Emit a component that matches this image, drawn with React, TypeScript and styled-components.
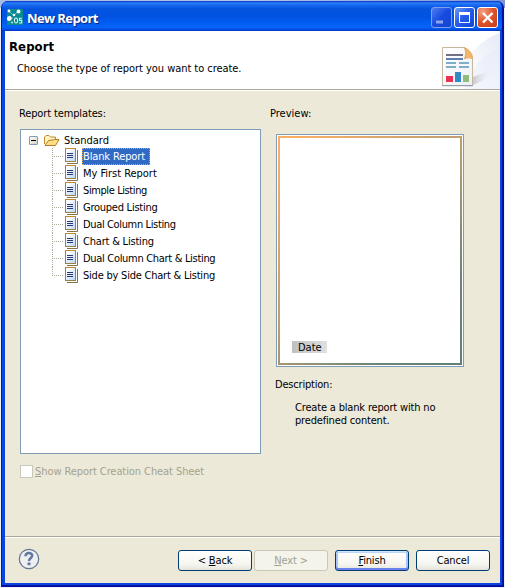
import React from "react";
import styled, { createGlobalStyle, css } from "styled-components";

const GlobalStyle = createGlobalStyle`
  * { box-sizing: border-box; }
  body { margin: 0; background: #e4e7f2; overflow: hidden; }
`;

const Desktop = styled.div`
  width: 505px;
  height: 588px;
  padding: 1px;
  background: linear-gradient(to right, #a9bbe0 0, #b5c4e8 250px, #7b95d8 100%) 0 0 / 100% 8px no-repeat, #eef0f8;
  font: 11px/13px "DejaVu Sans Condensed", "DejaVu Sans", sans-serif;
  font-stretch: condensed;
  color: #000;
`;

const Window = styled.div`
  width: 503px;
  height: 586px;
  display: flex;
  flex-direction: column;
  border-radius: 7px 7px 0 0;
  overflow: hidden;
  background: #0a45e0;
  border: solid #0010a0;
  border-width: 0 2px 2px 1px;
  border-left-color: #0019cf;
`;

const TitleBar = styled.div`
  flex: none;
  height: 30px;
  display: flex;
  align-items: center;
  padding: 0 4px 0 5px;
  background: linear-gradient(#0831c8 0, #2b80f8 2px, #1768ef 4px, #0453df 8px, #0053e1 16px, #005bf1 21px, #0665fb 26px, #0455e8 28px, #0034c0 30px);
`;

const TitleText = styled.h1`
  margin: 3px auto 0 4px;
  font: bold 13px/18px "Open Sans", "Noto Sans", sans-serif;
  letter-spacing: -0.6px;
  color: #fff;
  text-shadow: 1px 1px 1px #06257e;
`;

const CaptionButton = styled.div<{ $kind?: "close" | "off" }>`
  width: 21px;
  height: 21px;
  margin: 3px 0 0 2px;
  border: 1px solid ${(p) => (p.$kind === "off" ? "#7f9eee" : "#fff")};
  border-radius: 3px;
  background: ${(p) =>
    p.$kind === "close"
      ? "radial-gradient(circle at 25% 20%, #f1a183 0, #e0532c 50%, #c33d17 100%)"
      : p.$kind === "off"
        ? "linear-gradient(135deg, #4b7df0, #174be0 50%, #1345cf)"
        : "linear-gradient(135deg, #6f9cf8, #255de9 45%, #0d46d8)"};
  svg { display: block; }
`;

const Content = styled.div`
  flex: 1;
  display: flex;
  flex-direction: column;
  margin: 0 2px 2px 3px;
  background: #ece9d8;
`;

const Header = styled.header`
  height: 60px;
  display: flex;
  justify-content: space-between;
  background: #fff;
  border-bottom: 1px solid #fff;
  box-shadow: inset 0 -1px #aca899;
`;

const HeaderText = styled.div`
  padding: 8px 0 0 4px;
`;

const Heading = styled.h2`
  margin: 0;
  font: bold 13px/16px "DejaVu Sans Condensed", "DejaVu Sans", sans-serif;
  font-stretch: condensed;
  letter-spacing: 0.1px;
`;

const Message = styled.p`
  margin: 7px 0 0 8px;
  letter-spacing: -0.05px;
`;

const Panels = styled.main`
  display: flex;
  height: 445px;
  padding: 16px 0 0 15px;
`;

const LeftPanel = styled.section`
  width: 241px;
`;

const RightPanel = styled.section`
  width: 190px;
  margin-left: 9px;
`;

const Label = styled.div<{ $track?: number }>`
  white-space: nowrap;
  letter-spacing: ${(p) => p.$track ?? 0}px;
`;

const PanelTitle = styled(Label)`
  margin-left: -1px;
`;

const Tree = styled.div`
  width: 241px;
  height: 325px;
  margin-top: 9px;
  padding: 2px 0 0 8px;
  border: 1px solid #7f9db9;
  background: #fff;
`;

const RootRow = styled.div`
  display: flex;
  align-items: center;
  height: 16px;
`;

const Expander = styled.span`
  width: 9px;
  height: 9px;
  border: 1px solid #7f9db9;
  border-radius: 1px;
  background: linear-gradient(#000, #000) 1px 3px / 5px 1px no-repeat, linear-gradient(135deg, #fff, #d5cfc0);
`;

const ItemRow = styled.div<{ $last?: boolean }>`
  display: flex;
  align-items: center;
  height: 17px;
  margin-left: 23px;
  background:
    repeating-linear-gradient(to bottom, #aca899 0 1px, transparent 1px 2px) 0 0 / 1px ${(p) => (p.$last ? "9px" : "17px")} no-repeat,
    repeating-linear-gradient(to right, #aca899 0 1px, transparent 1px 2px) 0 8px / 12px 1px no-repeat;
`;

const ItemText = styled.span<{ $track: number; $selected?: boolean }>`
  height: 17px;
  line-height: 16px;
  margin-left: 4px;
  border: 1px solid transparent;
  white-space: nowrap;
  letter-spacing: ${(p) => p.$track}px;
  ${(p) =>
    p.$selected &&
    css`
      width: 68px;
      color: #fff;
      background: #316ac5;
      border: 1px dotted #e5a23c;
    `}
`;

const RootText = styled.span`
  margin-left: 4px;
`;

const CheckRow = styled.div`
  display: flex;
  align-items: center;
  gap: 2px;
  margin-top: 11px;
  color: #a5a28f;
`;

const CheckBox = styled.span`
  width: 13px;
  height: 13px;
  background: #fff;
  border: 1px solid #cac8bb;
`;

const PreviewFrame = styled.div`
  width: 188px;
  height: 233px;
  margin: 14px 0 11px 6px;
  padding: 1px;
  border: 1px solid #7f9db9;
  background: #fff;
`;

const PreviewPage = styled.div`
  height: 100%;
  padding: 203px 0 0 12px;
  border: 2px solid transparent;
  background: linear-gradient(#fff, #fff) padding-box, linear-gradient(135deg, #ffb064 0, #c09f70 45%, #6f8478 78%, #5e7f78 100%) border-box;
`;

const DateTag = styled.div`
  width: 35px;
  height: 12px;
  line-height: 13px;
  padding-left: 6px;
  background: linear-gradient(to right, #c0c0c0, #e0e0e0);
`;

const DescriptionTitle = styled(Label)`
  margin-left: 5px;
`;

const Description = styled.p`
  margin: 10px 0 0 25px;
  white-space: nowrap;
  letter-spacing: -0.17px;
`;

const Footer = styled.footer`
  flex: 1;
  display: flex;
  align-items: flex-start;
  padding: 11px 10px 0 13px;
  border-top: 1px solid #aca899;
  box-shadow: inset 0 1px #fff;
`;

const Button = styled.button<{ $default?: boolean; $gap: number }>`
  width: 74px;
  height: 21px;
  margin: 2px 0 0 ${(p) => p.$gap}px;
  padding: 0;
  font: inherit;
  color: #000;
  letter-spacing: -0.15px;
  border: 1px solid #003c74;
  border-radius: 3px;
  background: linear-gradient(#fff, #f5f5f0 70%, #e5e3da);
  ${(p) => p.$default && css`box-shadow: inset 0 1px #cee7ff, inset 0 -2px #6982ee, inset 2px 0 #a9c5f5, inset -2px 0 #a9c5f5, inset 0 2px #bcd4f6;`}
  &:disabled {
    color: #a1a192;
    border-color: #c9c7ba;
    background: #f5f4ea;
  }
`;

const AppIcon = styled(({ className }: { className?: string }) => (
  <svg className={className} width="16" height="16" viewBox="0 0 16 16">
    <rect width="16" height="16" fill="#078b91" />
    <path d="M3 3l4 4 4-5M2 9h4" stroke="#70bfc0" fill="none" />
    <circle cx="2" cy="2" r="1.4" fill="#fff" />
    <circle cx="11.5" cy="2.5" r="1.9" fill="#fff" />
    <circle cx="7" cy="6" r="1.2" fill="#fff" />
    <circle cx="2.3" cy="9.5" r="2.4" fill="#fff" />
    <circle cx="5" cy="13.5" r="1" fill="#bfe5e5" />
    <ellipse cx="9" cy="11.500" rx="1.600" ry="2.500" stroke="#d9f1f1" strokeWidth="1.100" fill="none" />
    <path d="M15 9.200h-2.500v2.200h2.200V14H12" stroke="#d9f1f1" strokeWidth="1.100" fill="none" />
  </svg>
))`
  margin: 2px 0 0 0;
`;

const Banner = () => (
  <svg width="75" height="58" viewBox="0 0 75 58">
    <defs>
      <linearGradient id="swoosh" x1="0" y1="1" x2="1" y2="0">
        <stop offset=".3" stopColor="#fff" />
        <stop offset="1" stopColor="#e6eaf7" />
      </linearGradient>
      <linearGradient id="page" x1="0" y1="0" x2="1" y2="1">
        <stop offset="0" stopColor="#fff" />
        <stop offset="1" stopColor="#edf0f5" />
      </linearGradient>
      <linearGradient id="shade" x1="0" x2="1">
        <stop offset="0" stopColor="#b9b3bd" />
        <stop offset="1" stopColor="#eceaf3" stopOpacity="0" />
      </linearGradient>
    </defs>
    <path d="M15 58C34 44 45 12 75 2V58Z" fill="url(#swoosh)" />
    <path d="M40 58C48 32 61 21 75 17V58Z" fill="#e3e8f7" opacity=".4" />
    <path d="M48 54V46L66 39 61 48Z" fill="url(#shade)" opacity=".7" />
    <path d="M17.500 16.500H39.500L47.500 27.500V54.500H17.500Z" fill="url(#page)" stroke="#c6b79d" />
    <path d="M17 54.700H48" stroke="#8996ac" />
    <path d="M39 16.500C41 19 41 23 39.500 28 43 26 46 27 47.500 28 48 23 44 18 39 16.500Z" fill="#f5b667" stroke="#d99b55" strokeWidth=".7" />
    <path d="M21 24H38" stroke="#756f86" strokeWidth="2" />
    <path d="M21 28H38" stroke="#607ead" strokeWidth="2" />
    <path d="M21 32H31M34 32H44M21 36H31M34 36H44" stroke="#7fadcc" strokeWidth="2" />
    <path d="M21 45h7v6h-7z" fill="#ea3153" />
    <path d="M30 41h6v10h-6z" fill="#328bc5" />
    <path d="M38 44h6v7h-6z" fill="#8fbd80" />
  </svg>
);

const FolderIcon = styled(({ className }: { className?: string }) => (
  <svg className={className} width="16" height="13" viewBox="0 0 16 13">
    <path d="M.5 10V3L2 1.500H5L6.500 3H11.500V6" fill="#fff2bd" stroke="#c18a30" />
    <path d="M1 11.500L4.500 6.500 9 6 10.500 5.500H15L11.500 11.500Z" fill="#ffdf86" stroke="#b67b22" />
  </svg>
))`
  margin-left: 6px;
`;

const PageIcon = styled(({ className }: { className?: string }) => (
  <svg className={className} width="13" height="16" viewBox="0 0 13 16">
    <defs>
      <linearGradient id="leaf" x1="0" y1="0" x2="1" y2="1">
        <stop offset=".2" stopColor="#fff" />
        <stop offset="1" stopColor="#b6d3f7" />
      </linearGradient>
    </defs>
    <path d="M12.500 2V15.500H2" stroke="#84724c" fill="none" />
    <rect x=".5" y=".5" width="10" height="13" fill="url(#leaf)" stroke="#9c8044" />
    <path d="M0 .5H11" stroke="#bd8b2b" />
    <path d="M2 5.500H8M2 7.500H8M2 9.500H8" stroke="#2d376f" />
  </svg>
))`
  flex: none;
  align-self: flex-start;
  margin-left: 13px;
`;

const HelpIcon = styled(({ className }: { className?: string }) => (
  <svg className={className} width="22" height="22" viewBox="0 0 22 22">
    <circle cx="11" cy="11" r="9.700" fill="#eeeff0" stroke="#667796" strokeWidth="1.200" />
    <path d="M7.500 8.300C7.700 3.800 14.300 4.200 14.200 7.700 14.100 10 11 10 11 13" fill="none" stroke="#63779f" strokeWidth="2.500" />
    <rect x="9.500" y="14.500" width="3" height="2.700" fill="#63779f" />
  </svg>
))`
  margin-right: auto;
`;

const items: { name: string; track: number }[] = [
  { name: "Blank Report", track: -0.13 },
  { name: "My First Report", track: -0.03 },
  { name: "Simple Listing", track: -0.4 },
  { name: "Grouped Listing", track: -0.25 },
  { name: "Dual Column Listing", track: -0.36 },
  { name: "Chart & Listing", track: -0.2 },
  { name: "Dual Column Chart & Listing", track: -0.31 },
  { name: "Side by Side Chart & Listing", track: -0.22 },
];

export default function App() {
  return (
    <Desktop>
      <GlobalStyle />
      <Window>
        <TitleBar>
          <AppIcon />
          <TitleText>New Report</TitleText>
          <CaptionButton $kind="off">
            <svg width="19" height="19"><path d="M4 12.500h7v3H4z" fill="#8da5ef" /></svg>
          </CaptionButton>
          <CaptionButton>
            <svg width="19" height="19"><path d="M4.500 5.500h10v9h-10z" fill="none" stroke="#fff" /><path d="M4 5.500h11" stroke="#fff" strokeWidth="3" /></svg>
          </CaptionButton>
          <CaptionButton $kind="close">
            <svg width="19" height="19"><path d="M5 5l9.500 9.500M14.500 5L5 14.500" stroke="#fff" strokeWidth="2.300" /></svg>
          </CaptionButton>
        </TitleBar>
        <Content>
          <Header>
            <HeaderText>
              <Heading>Report</Heading>
              <Message>Choose the type of report you want to create.</Message>
            </HeaderText>
            <Banner />
          </Header>
          <Panels>
            <LeftPanel>
              <PanelTitle $track={-0.13}>Report templates:</PanelTitle>
              <Tree>
                <RootRow>
                  <Expander />
                  <FolderIcon />
                  <RootText>Standard</RootText>
                </RootRow>
                {items.map((item, i) => (
                  <ItemRow key={item.name} $last={i === items.length - 1}>
                    <PageIcon />
                    <ItemText $track={item.track} $selected={i === 0}>{item.name}</ItemText>
                  </ItemRow>
                ))}
              </Tree>
              <CheckRow>
                <CheckBox />
                <Label $track={-0.08}><u>S</u>how Report Creation Cheat Sheet</Label>
              </CheckRow>
            </LeftPanel>
            <RightPanel>
              <Label>Preview:</Label>
              <PreviewFrame>
                <PreviewPage>
                  <DateTag>Date</DateTag>
                </PreviewPage>
              </PreviewFrame>
              <DescriptionTitle $track={-0.2}>Description:</DescriptionTitle>
              <Description>
                Create a blank report with no<br />predefined content.
              </Description>
            </RightPanel>
          </Panels>
          <Footer>
            <HelpIcon />
            <Button $gap={0}>&lt; <u>B</u>ack</Button>
            <Button $gap={2} disabled><u>N</u>ext &gt;</Button>
            <Button $gap={7} $default><u>F</u>inish</Button>
            <Button $gap={7}>Cancel</Button>
          </Footer>
        </Content>
      </Window>
    </Desktop>
  );
}
